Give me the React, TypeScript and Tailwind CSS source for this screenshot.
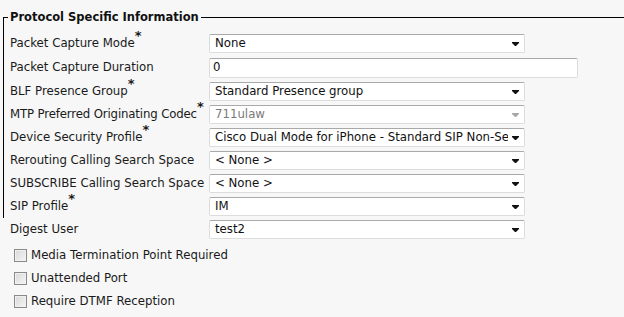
import React from "react";

type Field = {
  label: string;
  required?: boolean;
  value: string;
  kind: "select" | "text" | "disabled";
};

const topFields: Field[] = [
  { label: "Packet Capture Mode", required: true, value: "None", kind: "select" },
  { label: "Packet Capture Duration", value: "0", kind: "text" },
  { label: "BLF Presence Group", required: true, value: "Standard Presence group", kind: "select" },
  { label: "MTP Preferred Originating Codec", required: true, value: "711ulaw", kind: "disabled" },
  { label: "Device Security Profile", required: true, value: "Cisco Dual Mode for iPhone - Standard SIP Non-Secure Profile", kind: "select" },
  { label: "Rerouting Calling Search Space", value: "< None >", kind: "select" },
  { label: "SUBSCRIBE Calling Search Space", value: "< None >", kind: "select" },
  { label: "SIP Profile", required: true, value: "IM", kind: "select" },
];

const digest: Field = { label: "Digest User", value: "test2", kind: "select" };

const checks = ["Media Termination Point Required", "Unattended Port", "Require DTMF Reception"];

const Arrow = ({ disabled }: { disabled?: boolean }) => (
  <svg width="7" height="4" viewBox="0 0 7 4">
    <polygon points="0,0 7,0 7,1 4,4 3,4 0,1" fill={disabled ? "#a8a8a8" : "#111"} />
  </svg>
);

const Control = ({ field }: { field: Field }) => {
  if (field.kind === "text") {
    return (
      <div className="w-[369px] h-[20px] bg-white border border-[#dcdcdc] border-t-[#a9a9a9] rounded-[2px] flex items-center pl-[3px] text-[#111]">
        {field.value}
      </div>
    );
  }
  const disabled = field.kind === "disabled";
  return (
    <div className="w-[316px] h-[19px] bg-white border border-[#dcdcdc] border-t-[#a9a9a9] rounded-[2px] flex items-center">
      <span className={`flex-1 overflow-hidden whitespace-nowrap pl-[5px] ${disabled ? "text-[#7a7a7a]" : "text-[#111]"}`}>
        {field.value}
      </span>
      <span className="w-[16px] flex justify-center shrink-0 pr-[1px]">
        <Arrow disabled={disabled} />
      </span>
    </div>
  );
};

const Row = ({ field, tall }: { field: Field; tall?: boolean }) => (
  <div className={`flex items-center ${tall ? "h-[25px]" : "h-[23px]"}`}>
    <div className="w-[205px] pl-[6px] whitespace-nowrap text-[#1a1a1a]">
      <span className={field.label.length > 30 ? "tracking-[-0.15px]" : ""}>{field.label}</span>
      {field.required && <sup className="text-[13px] font-semibold">*</sup>}
    </div>
    <Control field={field} />
  </div>
);

export default function App() {
  return (
    <div className="w-[624px] h-[317px] overflow-hidden bg-[#f7f7f7] font-['DejaVu_Sans','Verdana',sans-serif] text-[11.75px] pt-[17px]">
      {/* FIELDSET */}
      <div className="ml-[3px] border-l border-t border-black">
        <div className="-mt-[8px] ml-[4px] h-[15px] w-fit px-[2px] bg-[#f7f7f7] flex items-center font-bold text-[11.5px] text-[#111]">
          Protocol Specific Information
        </div>
        <div className="mt-[7px]">
          {topFields.map((f, i) => (
            <Row key={f.label} field={f} tall={i === 1} />
          ))}
        </div>
      </div>
      <div className="ml-[4px]">
        <Row field={digest} />
        <div className="mt-[3px]">
          {checks.map((c) => (
            <div key={c} className="flex items-center h-[23px] pl-[10px] gap-[4px] text-[#1a1a1a]">
              <span className="w-[13px] h-[13px] border border-[#8a8a8a] bg-gradient-to-br from-[#d8d8d8] to-[#f6f6f6] shadow-[inset_0_0_0_1px_#f0f0f0]" />
              {c}
            </div>
          ))}
        </div>
      </div>
    </div>
  );
}
